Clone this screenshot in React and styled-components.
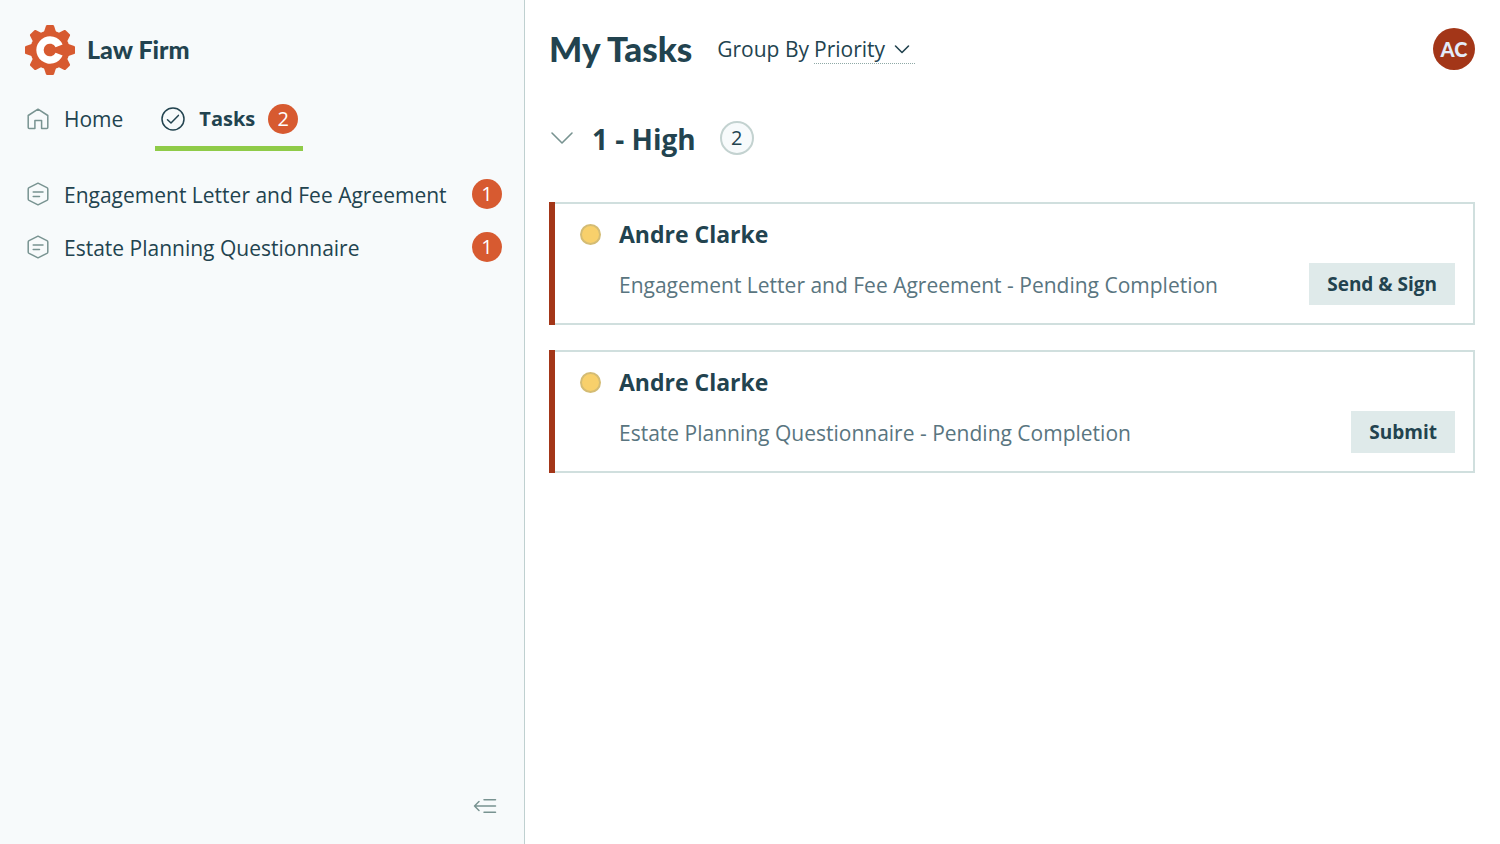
import React, { useState } from 'react'
import styled, { createGlobalStyle } from 'styled-components'

const taskList = [
    { id: 1, name: 'Andre Clarke', form: 'Engagement Letter and Fee Agreement', status: 'Pending Completion', action: 'Send & Sign' },
    { id: 2, name: 'Andre Clarke', form: 'Estate Planning Questionnaire', status: 'Pending Completion', action: 'Submit' },
]

const formList = [
    { title: 'Engagement Letter and Fee Agreement', count: 1 },
    { title: 'Estate Planning Questionnaire', count: 1 },
]

function GearLogo() {
    const teeth = [0, 45, 90, 135, 180, 225, 270, 315]

    return (
        <svg width="50" height="50" viewBox="-25 -25 50 50" aria-hidden="true">
            <g fill="#d75a30">
                <circle r="19.6" />
                {teeth.map((angle) => (
                    <path key={angle} d="M-6.4 -17 L-4 -24.2 Q-3.7 -25 -2.9 -25 H2.9 Q3.7 -25 4 -24.2 L6.4 -17 Z" transform={`rotate(${angle})`} />
                ))}
            </g>
            <path fill="#fff" d="M12.6 -5.4 A13.7 13.7 0 1 0 12.6 5.4 L5.6 2.8 A6.3 6.3 0 1 1 5.6 -2.8 Z" />
        </svg>
    )
}

function HomeIcon() {
    return (
        <Icon viewBox="-1 -1 26 26">
            <path d="M3.2 21.5 Q2.2 21.5 2.2 20.5 V8.5 L12 2.2 L21.8 8.5 V20.5 Q21.8 21.5 20.8 21.5 H15.6 V13.5 H8.9 V21.5 Z" />
        </Icon>
    )
}

function CheckIcon() {
    return (
        <Icon viewBox="-1 -1 26 26" $dark>
            <circle cx="12" cy="12" r="11" />
            <path d="M6.5 12.8 L10 16 L17.4 8.4" />
        </Icon>
    )
}

function FormIcon() {
    return (
        <Icon viewBox="-1 -1 26 26">
            <path d="M12 1.2 L20.9 5.6 Q21.8 6.1 21.8 7 V17 Q21.8 17.9 20.9 18.4 L12 22.8 L3.1 18.4 Q2.2 17.9 2.2 17 V7 Q2.2 6.1 3.1 5.6 Z" />
            <path d="M7.2 10 H17 M7.2 14.4 H13.5" />
        </Icon>
    )
}

function App() {
    const [open, setOpen] = useState(true)
    const [groupBy, setGroupBy] = useState('Priority')

    return (
        <>
            <GlobalStyle />
            <Layout>
                <Sidebar>
                    <Brand>
                        <GearLogo />
                        <BrandName>Law Firm</BrandName>
                    </Brand>

                    <Nav>
                        <Tab href="#home">
                            <HomeIcon />
                            Home
                        </Tab>
                        <Tab href="#tasks" $active>
                            <CheckIcon />
                            Tasks
                            <Badge>2</Badge>
                        </Tab>
                    </Nav>

                    <FormLinks>
                        {formList.map((form) => (
                            <FormLink key={form.title} href="#form">
                                <FormIcon />
                                <FormTitle>{form.title}</FormTitle>
                                <Badge>{form.count}</Badge>
                            </FormLink>
                        ))}
                    </FormLinks>

                    <CollapseButton aria-label="Collapse sidebar">
                        <Icon viewBox="-1 -1 26 26">
                            <path d="M11 5.8 H22.5 M1.5 12 H22.5 M11 18.2 H22.5 M6 7.5 L1.5 12 L6 16.5" />
                        </Icon>
                    </CollapseButton>
                </Sidebar>

                <Main>
                    <Header>
                        <Title>My Tasks</Title>
                        <GroupBy>
                            <label htmlFor="group-by">Group By</label>
                            <SelectWrap>
                                <Select id="group-by" value={groupBy} onChange={(e) => setGroupBy(e.target.value)}>
                                    <option>Priority</option>
                                    <option>Status</option>
                                </Select>
                                <Chevron width="16" height="10" viewBox="0 0 16 10" $dark>
                                    <path d="M1.5 2 L8 8.5 L14.5 2" />
                                </Chevron>
                            </SelectWrap>
                        </GroupBy>
                        <Avatar>AC</Avatar>
                    </Header>

                    <GroupHeader>
                        <ToggleButton aria-label="Toggle group" onClick={() => setOpen(!open)}>
                            <Chevron width="24" height="14" viewBox="0 0 24 14">
                                <path d="M2 2 L12 12 L22 2" />
                            </Chevron>
                        </ToggleButton>
                        <GroupTitle>1 - High</GroupTitle>
                        <Count>2</Count>
                    </GroupHeader>

                    {open && (
                        <Cards>
                            {taskList.map((task) => (
                                <Card key={task.id}>
                                    <CardBody>
                                        <CardTop>
                                            <Dot />
                                            <Name>{task.name}</Name>
                                        </CardTop>
                                        <CardBottom>
                                            <Description>{task.form} - {task.status}</Description>
                                            <ActionButton>{task.action}</ActionButton>
                                        </CardBottom>
                                    </CardBody>
                                </Card>
                            ))}
                        </Cards>
                    )}
                </Main>
            </Layout>
        </>
    )
}

const GlobalStyle = createGlobalStyle`
    * {
        box-sizing: border-box;
    }

    body {
        margin: 0;
        background: #fff;
        color: #22434f;
        font-family: "Open Sans", "Noto Sans", sans-serif;
        font-size: 21px;
        line-height: 30px;
    }

    h1, h2, h3, p {
        margin: 0;
    }

    a {
        color: inherit;
        text-decoration: none;
    }

    button, select {
        font: inherit;
        color: inherit;
        border: 0;
        padding: 0;
        background: none;
        cursor: pointer;
    }
`;

const Layout = styled.div`
    display: grid;
    grid-template-columns: 35% 1fr;
    min-height: 100vh;
`;

const Sidebar = styled.aside`
    display: flex;
    flex-direction: column;
    padding: 25px 22px 25px 25px;
    background: #f7fafb;
    border-right: 1px solid #bfd0d0;
`;

const Brand = styled.div`
    display: flex;
    align-items: center;
    gap: 12px;
`;

const BrandName = styled.span`
    padding-bottom: 2px;
    font-family: Lato, sans-serif;
    font-size: 25px;
    font-weight: 900;
`;

const Nav = styled.nav`
    display: flex;
    gap: 27px;
    margin-top: 22px;
`;

const Tab = styled.a`
    display: flex;
    align-items: center;
    gap: 13px;
    height: 54px;
    padding: 0 5px 6px ${props => props.$active ? '5px' : '0'};
    border-bottom: 5px solid ${props => props.$active ? '#8fcb48' : 'transparent'};
    font-size: ${props => props.$active ? '20px' : '21px'};
    font-weight: ${props => props.$active ? 700 : 400};
`;

const Icon = styled.svg`
    flex: none;
    width: 26px;
    height: 26px;
    fill: none;
    stroke: ${props => props.$dark ? '#22434f' : '#789391'};
    stroke-width: 1.5;
    stroke-linecap: round;
    stroke-linejoin: round;
`;

const Badge = styled.span`
    display: flex;
    align-items: center;
    justify-content: center;
    flex: none;
    width: 30px;
    height: 30px;
    border-radius: 50%;
    background: #d75a30;
    color: #fff;
    font-size: 20px;
    font-weight: 400;
`;

const FormLinks = styled.nav`
    display: flex;
    flex-direction: column;
    gap: 21px;
    margin-top: 27px;
`;

const FormLink = styled.a`
    display: flex;
    align-items: center;
    gap: 13px;
`;

const FormTitle = styled.span`
    flex: 1;
    padding-top: 2px;
`;

const CollapseButton = styled.button`
    display: flex;
    align-self: flex-end;
    margin: auto 4px 0 0;
`;

const Main = styled.main`
    padding: 24px 25px 24px 24px;
`;

const Header = styled.header`
    display: flex;
    align-items: center;
    gap: 25px;
    height: 50px;
`;

const Title = styled.h1`
    padding-bottom: 2px;
    font-family: Lato, sans-serif;
    font-size: 35px;
    font-weight: 900;
    line-height: 48px;
`;

const GroupBy = styled.div`
    display: flex;
    gap: 5px;
    line-height: 28px;
`;

const SelectWrap = styled.div`
    display: grid;
    grid-template-columns: 1fr 16px;
    align-items: center;
    width: 101px;
    padding-right: 5px;
    border-bottom: 1px dotted #8fa9a6;
`;

const Select = styled.select`
    grid-area: 1 / 1 / 2 / 3;
    width: 100%;
    height: 28px;
    appearance: none;
    outline: none;
`;

const Chevron = styled.svg`
    grid-area: 1 / 2;
    pointer-events: none;
    fill: none;
    stroke: ${props => props.$dark ? '#22434f' : '#789391'};
    stroke-width: 1.6;
    stroke-linecap: round;
    stroke-linejoin: round;
`;

const Avatar = styled.div`
    display: flex;
    align-items: center;
    justify-content: center;
    width: 42px;
    height: 42px;
    margin-left: auto;
    border-radius: 50%;
    background: #a33618;
    color: #e3ebfa;
    font-family: Lato, sans-serif;
    font-size: 20px;
    font-weight: 900;
`;

const GroupHeader = styled.div`
    display: flex;
    align-items: center;
    height: 34px;
    margin-top: 47px;
`;

const ToggleButton = styled.button`
    display: flex;
    margin: 0 18px 0 1px;
`;

const GroupTitle = styled.h2`
    padding-top: 2px;
    font-size: 28px;
    font-weight: 700;
    line-height: 34px;
`;

const Count = styled.span`
    display: flex;
    align-items: center;
    justify-content: center;
    width: 34px;
    height: 34px;
    margin-left: 24px;
    border: 2px solid #c3d2d0;
    border-radius: 50%;
    background: #f7fafb;
    font-size: 20px;
`;

const Cards = styled.section`
    display: flex;
    flex-direction: column;
    gap: 25px;
    margin-top: 47px;
`;

const Card = styled.article`
    border-left: 6px solid #a33618;
`;

const CardBody = styled.div`
    padding: 14px 18px 18px 25px;
    border: 2px solid #d0dfde;
    border-left: 0;
`;

const CardTop = styled.div`
    display: flex;
    align-items: center;
    gap: 18px;
`;

const Dot = styled.span`
    width: 21px;
    height: 21px;
    border: 2px solid #d4bc74;
    border-radius: 50%;
    background: #f8d06b;
`;

const Name = styled.h3`
    font-size: 23px;
    font-weight: 700;
    line-height: 32px;
`;

const CardBottom = styled.div`
    display: flex;
    align-items: center;
    justify-content: space-between;
    margin-top: 13px;
    padding-left: 39px;
`;

const Description = styled.p`
    padding-top: 2px;
    color: #597580;
`;

const ActionButton = styled.button`
    height: 42px;
    padding: 0 18px;
    background: #dfeaea;
    font-size: 19px;
    font-weight: 700;
`;

export default App
